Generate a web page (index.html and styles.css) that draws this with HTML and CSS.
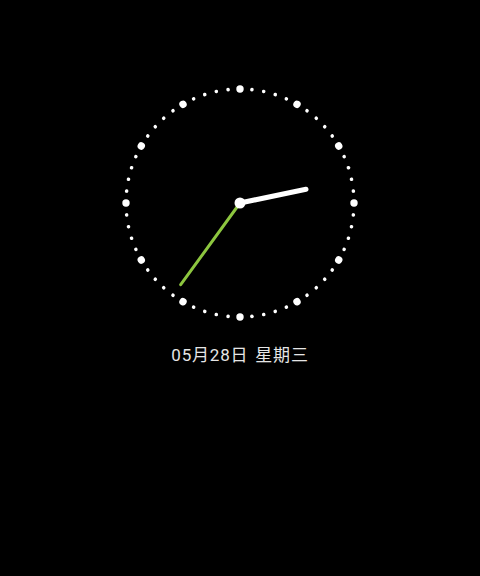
FILE: index.html
```html
<!DOCTYPE html>
<html lang="zh">
<head>
<meta charset="utf-8">
<link rel="stylesheet" href="styles.css">
</head>
<body>
<main class="screen">
  <svg class="clock" width="240" height="240" viewBox="0 0 240 240">
    <g class="minute-dots">
      <circle cx="120" cy="6" r="1.8" transform="rotate(6 120 120)"/>
      <circle cx="120" cy="6" r="1.8" transform="rotate(12 120 120)"/>
      <circle cx="120" cy="6" r="1.8" transform="rotate(18 120 120)"/>
      <circle cx="120" cy="6" r="1.8" transform="rotate(24 120 120)"/>
      <circle cx="120" cy="6" r="1.8" transform="rotate(36 120 120)"/>
      <circle cx="120" cy="6" r="1.8" transform="rotate(42 120 120)"/>
      <circle cx="120" cy="6" r="1.8" transform="rotate(48 120 120)"/>
      <circle cx="120" cy="6" r="1.8" transform="rotate(54 120 120)"/>
      <circle cx="120" cy="6" r="1.8" transform="rotate(66 120 120)"/>
      <circle cx="120" cy="6" r="1.8" transform="rotate(72 120 120)"/>
      <circle cx="120" cy="6" r="1.8" transform="rotate(78 120 120)"/>
      <circle cx="120" cy="6" r="1.8" transform="rotate(84 120 120)"/>
      <circle cx="120" cy="6" r="1.8" transform="rotate(96 120 120)"/>
      <circle cx="120" cy="6" r="1.8" transform="rotate(102 120 120)"/>
      <circle cx="120" cy="6" r="1.8" transform="rotate(108 120 120)"/>
      <circle cx="120" cy="6" r="1.8" transform="rotate(114 120 120)"/>
      <circle cx="120" cy="6" r="1.8" transform="rotate(126 120 120)"/>
      <circle cx="120" cy="6" r="1.8" transform="rotate(132 120 120)"/>
      <circle cx="120" cy="6" r="1.8" transform="rotate(138 120 120)"/>
      <circle cx="120" cy="6" r="1.8" transform="rotate(144 120 120)"/>
      <circle cx="120" cy="6" r="1.8" transform="rotate(156 120 120)"/>
      <circle cx="120" cy="6" r="1.8" transform="rotate(162 120 120)"/>
      <circle cx="120" cy="6" r="1.8" transform="rotate(168 120 120)"/>
      <circle cx="120" cy="6" r="1.8" transform="rotate(174 120 120)"/>
      <circle cx="120" cy="6" r="1.8" transform="rotate(186 120 120)"/>
      <circle cx="120" cy="6" r="1.8" transform="rotate(192 120 120)"/>
      <circle cx="120" cy="6" r="1.8" transform="rotate(198 120 120)"/>
      <circle cx="120" cy="6" r="1.8" transform="rotate(204 120 120)"/>
      <circle cx="120" cy="6" r="1.8" transform="rotate(216 120 120)"/>
      <circle cx="120" cy="6" r="1.8" transform="rotate(222 120 120)"/>
      <circle cx="120" cy="6" r="1.8" transform="rotate(228 120 120)"/>
      <circle cx="120" cy="6" r="1.8" transform="rotate(234 120 120)"/>
      <circle cx="120" cy="6" r="1.8" transform="rotate(246 120 120)"/>
      <circle cx="120" cy="6" r="1.8" transform="rotate(252 120 120)"/>
      <circle cx="120" cy="6" r="1.8" transform="rotate(258 120 120)"/>
      <circle cx="120" cy="6" r="1.8" transform="rotate(264 120 120)"/>
      <circle cx="120" cy="6" r="1.8" transform="rotate(276 120 120)"/>
      <circle cx="120" cy="6" r="1.8" transform="rotate(282 120 120)"/>
      <circle cx="120" cy="6" r="1.8" transform="rotate(288 120 120)"/>
      <circle cx="120" cy="6" r="1.8" transform="rotate(294 120 120)"/>
      <circle cx="120" cy="6" r="1.8" transform="rotate(306 120 120)"/>
      <circle cx="120" cy="6" r="1.8" transform="rotate(312 120 120)"/>
      <circle cx="120" cy="6" r="1.8" transform="rotate(318 120 120)"/>
      <circle cx="120" cy="6" r="1.8" transform="rotate(324 120 120)"/>
      <circle cx="120" cy="6" r="1.8" transform="rotate(336 120 120)"/>
      <circle cx="120" cy="6" r="1.8" transform="rotate(342 120 120)"/>
      <circle cx="120" cy="6" r="1.8" transform="rotate(348 120 120)"/>
      <circle cx="120" cy="6" r="1.8" transform="rotate(354 120 120)"/>
    </g>
    <g class="hour-dots">
      <circle cx="120" cy="6" r="3.7"/>
      <circle cx="120" cy="6" r="3.7" transform="rotate(30 120 120)"/>
      <circle cx="120" cy="6" r="3.7" transform="rotate(60 120 120)"/>
      <circle cx="120" cy="6" r="3.7" transform="rotate(90 120 120)"/>
      <circle cx="120" cy="6" r="3.7" transform="rotate(120 120 120)"/>
      <circle cx="120" cy="6" r="3.7" transform="rotate(150 120 120)"/>
      <circle cx="120" cy="6" r="3.7" transform="rotate(180 120 120)"/>
      <circle cx="120" cy="6" r="3.7" transform="rotate(210 120 120)"/>
      <circle cx="120" cy="6" r="3.7" transform="rotate(240 120 120)"/>
      <circle cx="120" cy="6" r="3.7" transform="rotate(270 120 120)"/>
      <circle cx="120" cy="6" r="3.7" transform="rotate(300 120 120)"/>
      <circle cx="120" cy="6" r="3.7" transform="rotate(330 120 120)"/>
    </g>
    <line class="minute-hand" x1="120" y1="120" x2="60.7" y2="201.7"/>
    <line class="hour-hand" x1="120" y1="120" x2="186" y2="106.2"/>
    <circle class="pivot" cx="120" cy="120" r="5.5"/>
  </svg>
  <p class="date">05月28日 星期三</p>
</main>
</body>
</html>
```

FILE: styles.css
```css
html, body {
  margin: 0;
  padding: 0;
  background: #000;
}

.screen {
  width: 480px;
  height: 576px;
  display: flex;
  flex-direction: column;
  align-items: center;
  padding-top: 83px;
  box-sizing: border-box;
}

.clock {
  display: block;
}

.minute-dots circle,
.hour-dots circle,
.pivot {
  fill: #fff;
}

.hour-hand {
  stroke: #fff;
  stroke-width: 5;
  stroke-linecap: round;
}

.minute-hand {
  stroke: #8dc63f;
  stroke-width: 3;
  stroke-linecap: round;
}

.date {
  margin: 21px 0 0;
  font-family: Roboto, "Noto Sans CJK SC", sans-serif;
  font-size: 17px;
  line-height: 22px;
  color: #e6e6e6;
  letter-spacing: 0.8px;
  word-spacing: 2px;
}
```
